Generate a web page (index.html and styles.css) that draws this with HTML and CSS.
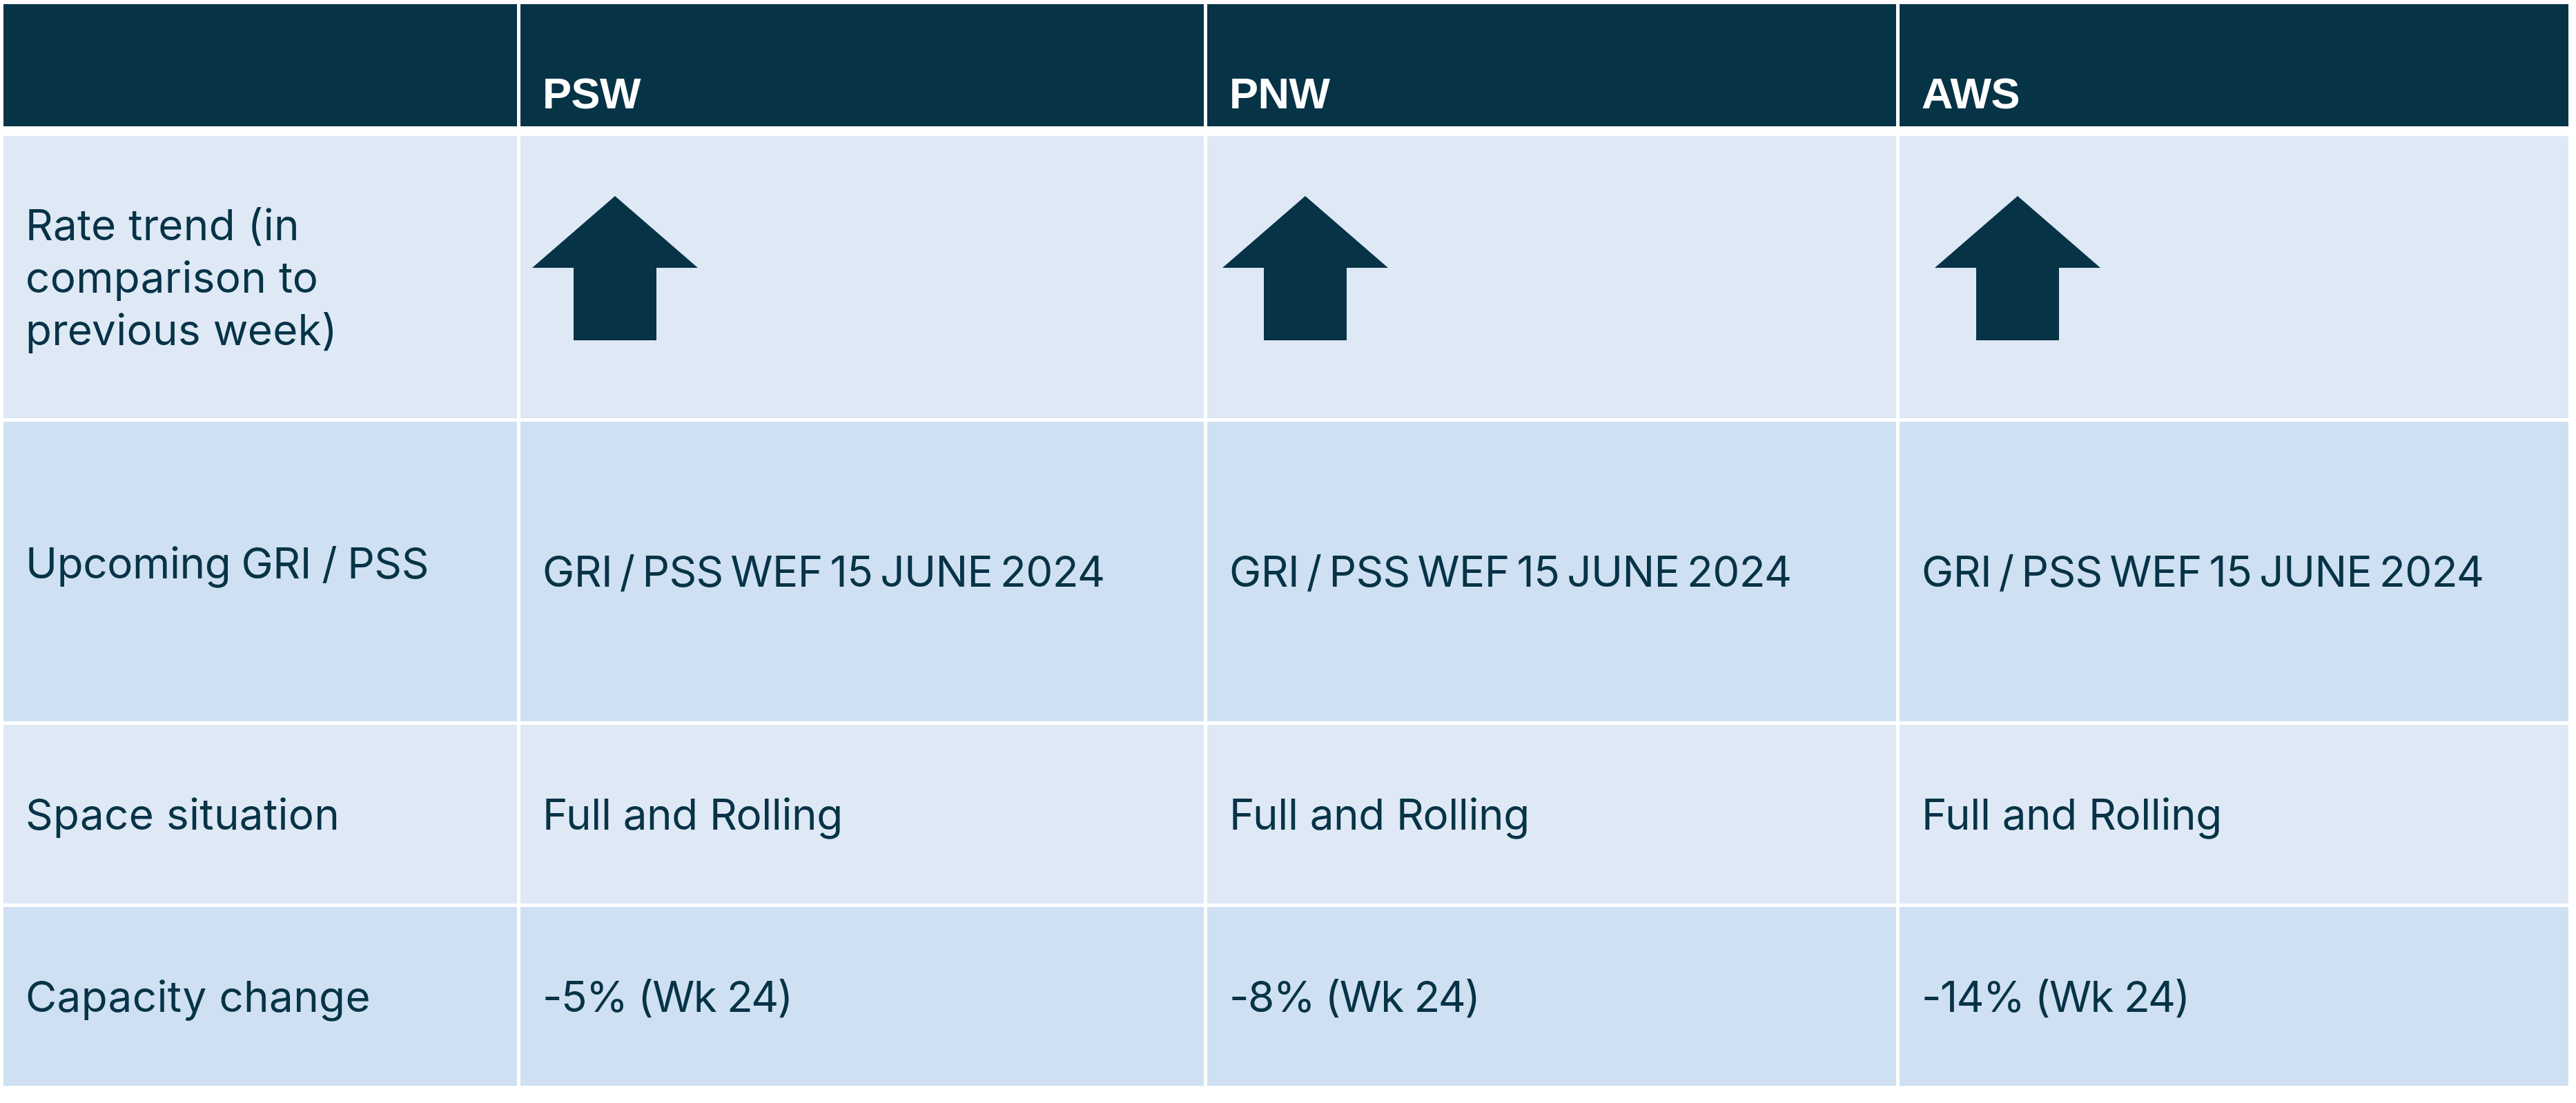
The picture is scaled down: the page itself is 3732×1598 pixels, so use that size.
FILE: index.html
```html
<!DOCTYPE html>
<html lang="en">
<head>
<meta charset="utf-8">
<title>Rate overview</title>
<link rel="stylesheet" href="styles.css">
</head>
<body>
<div class="table">
  <div class="row row--head">
    <div class="cell cell--head"></div>
    <div class="cell cell--head">PSW</div>
    <div class="cell cell--head">PNW</div>
    <div class="cell cell--head">AWS</div>
  </div>
  <div class="row row--trend row--light">
    <div class="cell cell--label">Rate trend (in<br>comparison to<br>previous week)</div>
    <div class="cell cell--arrow">
      <svg class="arrow arrow--psw" viewBox="0 0 240 209" width="240" height="209"><path d="M120 0 L240 104 L180 104 L180 209 L60 209 L60 104 L0 104 Z"/></svg>
    </div>
    <div class="cell cell--arrow">
      <svg class="arrow arrow--pnw" viewBox="0 0 240 209" width="240" height="209"><path d="M120 0 L240 104 L180 104 L180 209 L60 209 L60 104 L0 104 Z"/></svg>
    </div>
    <div class="cell cell--arrow">
      <svg class="arrow arrow--aws" viewBox="0 0 240 209" width="240" height="209"><path d="M120 0 L240 104 L180 104 L180 209 L60 209 L60 104 L0 104 Z"/></svg>
    </div>
  </div>
  <div class="row row--gri row--dark">
    <div class="cell cell--label cell--raised">Upcoming GRI / PSS</div>
    <div class="cell cell--value">GRI / PSS WEF 15 JUNE 2024</div>
    <div class="cell cell--value">GRI / PSS WEF 15 JUNE 2024</div>
    <div class="cell cell--value">GRI / PSS WEF 15 JUNE 2024</div>
  </div>
  <div class="row row--short row--light">
    <div class="cell cell--label">Space situation</div>
    <div class="cell">Full and Rolling</div>
    <div class="cell">Full and Rolling</div>
    <div class="cell">Full and Rolling</div>
  </div>
  <div class="row row--short row--cap row--dark">
    <div class="cell cell--label">Capacity change</div>
    <div class="cell cell--value">-5% (Wk 24)</div>
    <div class="cell cell--value">-8% (Wk 24)</div>
    <div class="cell cell--value">-14% (Wk 24)</div>
  </div>
</div>
</body>
</html>
```

FILE: styles.css
```css
html, body {
  margin: 0;
  padding: 0;
  background: #ffffff;
}

body {
  font-family: "Inter", "Liberation Sans", sans-serif;
  color: #073347;
}

.table {
  display: flex;
  flex-direction: column;
  gap: 5px;
  width: 3716px;
  margin: 6px 0 0 5px;
}

.row {
  display: grid;
  grid-template-columns: 744px 990px 998px 969px;
  column-gap: 5px;
}

.row--head {
  height: 177px;
  margin-bottom: 9px;
}

.row--trend {
  height: 409px;
}

.row--gri {
  height: 434px;
}

.row--short {
  height: 259px;
}

.cell {
  display: flex;
  align-items: center;
  padding: 0 32px;
  font-size: 62px;
  line-height: 76px;
  letter-spacing: -0.4px;
  white-space: nowrap;
}

.cell--label {
  letter-spacing: 0.3px;
}

.row--light .cell {
  background: #dee9f5;
}

.row--dark .cell {
  background: #cee0f1;
}

.row--gri .cell--value {
  word-spacing: -6px;
  letter-spacing: -0.6px;
}

.row--cap .cell--value {
  letter-spacing: -1.6px;
}

.cell--head {
  background: #073347;
  color: #ffffff;
  font-family: "Liberation Sans", Arial, sans-serif;
  font-weight: 700;
  font-size: 63px;
  line-height: 63px;
  letter-spacing: -0.5px;
  align-items: flex-end;
  padding-bottom: 16px;
}

.cell--raised {
  padding-bottom: 24px;
  letter-spacing: -0.4px;
  word-spacing: -2px;
}

.cell--arrow {
  padding: 0;
}

.arrow {
  display: block;
  margin-bottom: 26px;
  fill: #073347;
}

.arrow--psw {
  margin-left: 17px;
}

.arrow--pnw {
  margin-left: 22px;
}

.arrow--aws {
  margin-left: 51px;
}
```
